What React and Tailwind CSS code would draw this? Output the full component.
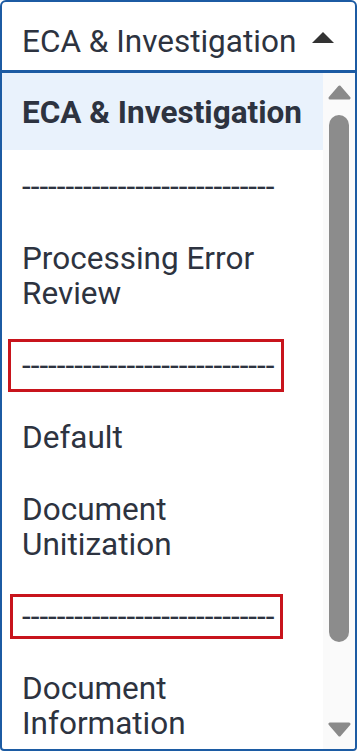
export default function App() {
  const dash = "-----------------------------";
  return (
    <div className="w-[357px] h-[751px] flex flex-col bg-white font-['Roboto',sans-serif] text-[#2d3340]">
      <div className="h-[73px] shrink-0 border-2 border-b-[3px] border-[#1c5ba3] rounded-t-[6px] flex items-start justify-between pl-5 pr-[21px] pt-[21.5px]">
        <span className="text-[31.5px] leading-[35px]">ECA &amp; Investigation</span>
        <svg className="mt-[8.5px]" width="22" height="11" viewBox="0 0 22 11">
          <polygon points="11,0 22,11 0,11" fill="#333333" />
        </svg>
      </div>

      <div className="flex-1 min-h-0 flex border-2 border-t-0 border-[#1c5ba3] rounded-b-[4px] overflow-hidden">
        <ul className="flex-1 text-[31.5px] leading-[35px]">
          <li className="pl-5 pt-[22px] pb-[20px] bg-[#e9f2fc] font-bold">ECA &amp; Investigation</li>
          <li className="pl-5 py-[18.5px]">{dash}</li>
          <li className="pl-5 py-[18.5px]">Processing Error<br />Review</li>
          <li className="relative pl-5 py-[18.5px]">
            {dash}
            <span className="absolute left-[6px] top-[10px] w-[276px] h-[53px] border-[3px] border-[#c8141c]"></span>
          </li>
          <li className="pl-5 py-[18.5px]">Default</li>
          <li className="pl-5 py-[18.5px]">Document<br />Unitization</li>
          <li className="relative pl-5 py-[18.5px]">
            {dash}
            <span className="absolute left-[8px] top-[14px] w-[273px] h-[45px] border-[3px] border-[#c8141c]"></span>
          </li>
          <li className="pl-5 py-[18.5px]">Document<br />Information</li>
        </ul>

        <div className="w-[32px] shrink-0 bg-[#fafafa] flex flex-col items-center">
          <svg className="mt-[12px]" width="23" height="15" viewBox="0 0 23 15">
            <polygon points="11.5,2 21,13 2,13" fill="#8a8a8a" stroke="#8a8a8a" strokeWidth="3" strokeLinejoin="round" />
          </svg>
          <div className="mt-[15px] w-[20px] h-[527px] rounded-full bg-[#8c8c8c]"></div>
          <svg className="mt-[80px]" width="23" height="16" viewBox="0 0 23 16">
            <polygon points="2,2 21,2 11.5,13" fill="#8a8a8a" stroke="#8a8a8a" strokeWidth="3" strokeLinejoin="round" />
          </svg>
        </div>
      </div>
    </div>
  );
}
